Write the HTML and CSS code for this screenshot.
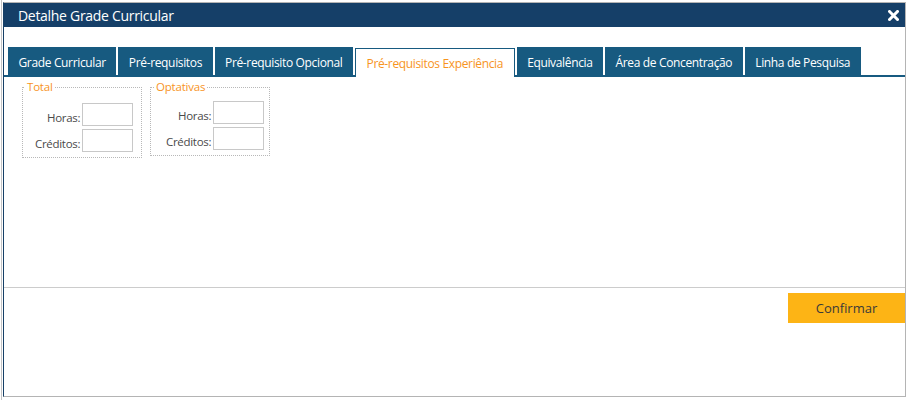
FILE: index.html
```html
<!DOCTYPE html>
<html lang="pt-BR">
<head>
<meta charset="utf-8">
<title>Detalhe Grade Curricular</title>
<link rel="stylesheet" href="styles.css">
</head>
<body>
<div class="page">
  <div class="dialog">
    <div class="titlebar">
      <span class="title">Detalhe Grade Curricular</span>
      <svg class="close" width="11" height="11" viewBox="0 0 11 11" aria-label="Fechar">
        <path d="M1.5 1.5 L9.5 9.5 M9.5 1.5 L1.5 9.5" stroke="#fff" stroke-width="3" stroke-linecap="square"/>
      </svg>
    </div>
    <div class="content">
      <ul class="tabs">
        <li class="tab">Grade Curricular</li>
        <li class="tab">Pré-requisitos</li>
        <li class="tab">Pré-requisito Opcional</li>
        <li class="tab active">Pré-requisitos Experiência</li>
        <li class="tab">Equivalência</li>
        <li class="tab">Área de Concentração</li>
        <li class="tab">Linha de Pesquisa</li>
      </ul>
      <div class="panel">
        <fieldset class="group group-total">
          <legend>Total</legend>
          <div class="fields">
            <label class="lbl">Horas:</label><input class="inp" type="text">
            <label class="lbl">Créditos:</label><input class="inp" type="text">
          </div>
        </fieldset>
        <fieldset class="group group-opt">
          <legend>Optativas</legend>
          <div class="fields">
            <label class="lbl">Horas:</label><input class="inp" type="text">
            <label class="lbl">Créditos:</label><input class="inp" type="text">
          </div>
        </fieldset>
      </div>
    </div>
    <div class="footer">
      <button class="confirm" type="button">Confirmar</button>
    </div>
  </div>
</div>
</body>
</html>
```
FILE: styles.css
```css
* { box-sizing: border-box; }
html, body { margin: 0; padding: 0; background: #fff; }
body { font-family: "Open Sans", "Noto Sans", sans-serif; }

.page {
  margin-left: 1px;
  border-left: 1px solid #c4c4c4;
  height: 400px;
  padding-top: 2px;
}

.dialog {
  margin-left: 1px;
  width: 903px;
  height: 395px;
  border: 1px solid #b4b4b4;
  border-left: 1px solid #163f66;
  display: flex;
  flex-direction: column;
  background: #fff;
}

.titlebar {
  height: 24px;
  background: #153f68;
  display: flex;
  align-items: center;
  justify-content: space-between;
  padding: 0 6px 0 14px;
  color: #fff;
}
.title { font-size: 14px; letter-spacing: -0.3px; }
.close { display: block; }

.content { flex: 1; display: flex; flex-direction: column; padding-top: 20px; }

.tabs {
  list-style: none;
  margin: 0;
  padding: 0 0 0 4px;
  display: flex;
  gap: 2px;
  border-bottom: 2px solid #175a80;
  height: 30px;
}
.tab {
  height: 28px;
  background: #175a80;
  color: #fff;
  font-size: 12px;
  letter-spacing: -0.35px;
  padding: 2px 10.5px 0;
  display: flex;
  align-items: center;
}
.tab.active {
  background: #fff;
  color: #f7941e;
  border: 1px solid #175a80;
  border-bottom: none;
  margin-top: 1px;
  height: 29px;
  padding: 1px 10.5px 0;
}

.panel {
  flex: 1;
  display: flex;
  align-items: flex-start;
  gap: 8px;
  padding: 3px 0 0 18px;
  border-bottom: 1px solid #cccccc;
}

.group {
  margin: 0;
  width: 120px;
  min-width: 0;
  border: 1px dotted #b8b8b8;
  padding: 9px 8px 5px 12px;
}
.group legend {
  color: #f7941e;
  font-size: 11.5px;
  letter-spacing: -0.2px;
  padding: 0 2px;
  line-height: 14px;
}
.group-total legend { margin-left: -10px; }
.group-opt { padding-top: 7px; padding-left: 15px; padding-right: 5px; }
.group-opt legend { margin-left: -12px; }

.fields {
  display: grid;
  grid-template-columns: 1fr 51px;
  column-gap: 2px;
  row-gap: 3px;
  align-items: center;
}
.lbl {
  text-align: right;
  font-size: 11.5px;
  color: #4a4a4a;
  letter-spacing: -0.3px;
  padding-top: 5px;
}
.inp {
  width: 51px;
  height: 23px;
  border: 1px solid #c8c8c8;
  margin: 0;
  padding: 0;
  background: #fff;
}

.footer {
  height: 108px;
  display: flex;
  justify-content: flex-end;
  align-items: flex-start;
  padding-top: 5px;
}
.confirm {
  width: 117px;
  height: 30px;
  background: #fdb415;
  border: none;
  color: #3a3a3a;
  font-family: "Open Sans", "Noto Sans", sans-serif;
  font-size: 13px;
  padding: 0;
}
```
